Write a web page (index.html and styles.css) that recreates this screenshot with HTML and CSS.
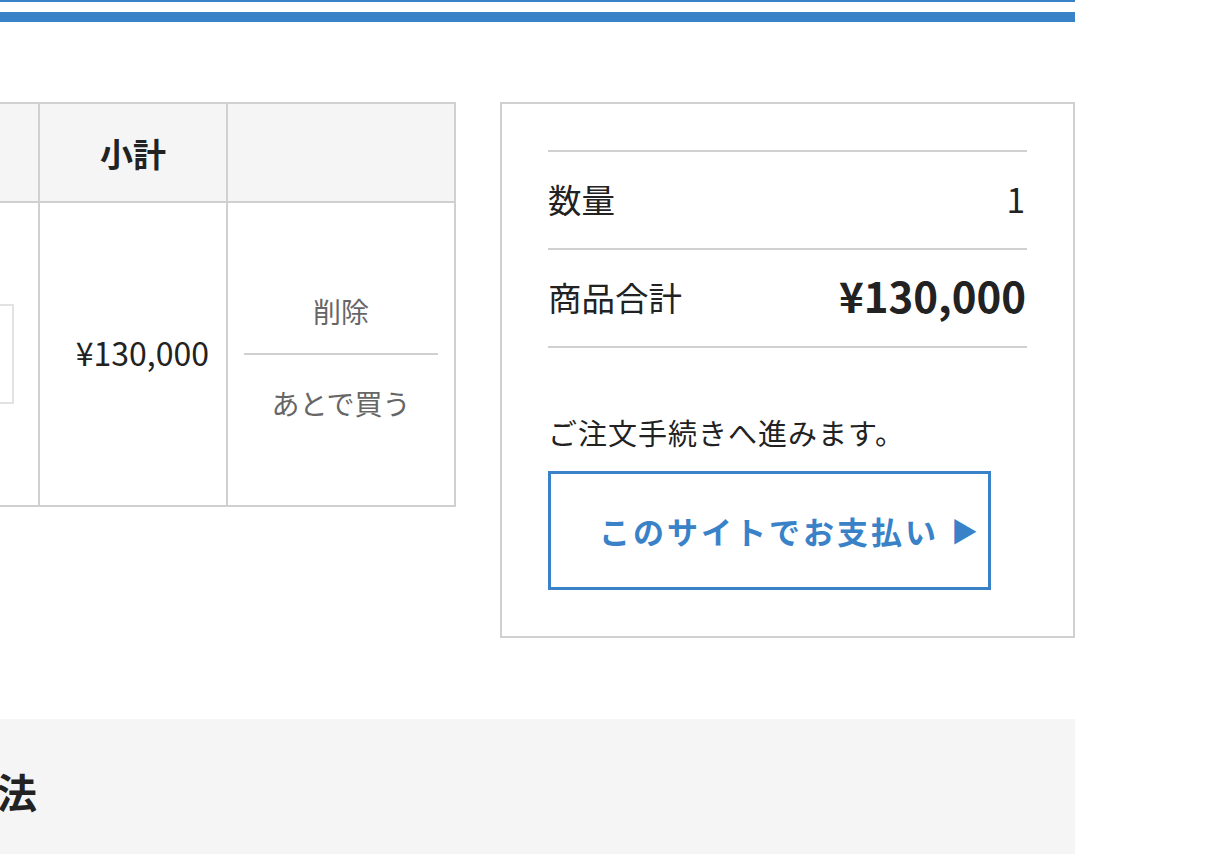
FILE: index.html
```html
<!DOCTYPE html>
<html lang="ja">
  <head>
    <meta charset="UTF-8" />
    <title>カート</title>
    <link rel="stylesheet" href="styles.css">
  </head>
  <body>
    <div class="page">
      <div class="bar-thin"></div>
      <div class="bar-thick"></div>

      <div class="cart">
        <table class="cart-table">
          <colgroup>
            <col class="col-item">
            <col class="col-qty">
            <col class="col-sub">
            <col class="col-act">
          </colgroup>
          <thead>
            <tr>
              <th>商品</th>
              <th>数量</th>
              <th>小計</th>
              <th></th>
            </tr>
          </thead>
          <tbody>
            <tr>
              <td></td>
              <td>
                <div class="qty-box">1</div>
              </td>
              <td class="cell-sub">¥130,000</td>
              <td class="cell-act">
                <a class="act-link act-delete" href="#">削除</a>
                <a class="act-link act-later" href="#">あとで買う</a>
              </td>
            </tr>
          </tbody>
        </table>

        <div class="summary">
          <div class="summary-row">
            <span>数量</span>
            <span class="summary-num">1</span>
          </div>
          <div class="summary-row">
            <span>商品合計</span>
            <span class="summary-total">¥130,000</span>
          </div>
          <p class="summary-note">ご注文手続きへ進みます。</p>
          <a class="pay-button" href="#">このサイトでお支払い<span class="pay-arrow">▶</span></a>
        </div>
      </div>

      <div class="payment">
        <h2>お支払い方法</h2>
      </div>
    </div>
  </body>
</html>
```

FILE: styles.css
```css
body {
  margin: 0;
  font-family: "Noto Sans CJK JP", "Noto Sans", sans-serif;
  color: #222;
  background: #fff;
  overflow: hidden;
}
.page {
  width: 1495px;
  margin-left: -420px;
}
.bar-thin {
  height: 2px;
  background: #3a82c8;
}
.bar-thick {
  height: 10px;
  margin-top: 10px;
  background: #3a82c8;
}
.cart {
  display: flex;
  align-items: flex-start;
  gap: 44px;
  margin-top: 80px;
}
.cart-table {
  flex-shrink: 0;
  width: 876px;
  table-layout: fixed;
  border-collapse: collapse;
  border: 2px solid #d0d0d0;
}
.col-item {
  width: 300px;
}
.col-qty {
  width: 158px;
}
.col-sub {
  width: 188px;
}
.col-act {
  width: 228px;
}
.cart-table th,
.cart-table td {
  border: 2px solid #d0d0d0;
  text-align: center;
  vertical-align: middle;
  padding: 0;
}
.cart-table th {
  height: 99px;
  box-sizing: border-box;
  background: #f5f5f5;
  font-size: 33px;
  font-weight: bold;
}
.cart-table td {
  height: 302px;
  font-size: 32px;
}
.cart-table td.cell-sub {
  height: 298px;
  padding: 0 17px 4px 0;
  text-align: right;
}
.cart-table td.cell-act {
  height: 296px;
  padding-top: 6px;
}
.qty-box {
  width: 100px;
  height: 96px;
  margin-left: 28px;
  border: 2px solid #e2e2e2;
  font-size: 28px;
  line-height: 96px;
}
.act-link {
  display: block;
  margin: 0 16px;
  color: #666;
  font-size: 28px;
  text-decoration: none;
}
.act-delete {
  padding: 0 0 22px;
  border-bottom: 2px solid #d0d0d0;
}
.act-later {
  padding-top: 28px;
}
.summary {
  flex-shrink: 0;
  width: 479px;
  padding: 46px;
  border: 2px solid #d0d0d0;
}
.summary-row {
  display: flex;
  justify-content: space-between;
  align-items: center;
  box-sizing: border-box;
  height: 98px;
  padding-bottom: 4px;
  border-top: 2px solid #d0d0d0;
  font-size: 33.5px;
}
.summary-row:last-of-type {
  height: 100px;
  border-bottom: 2px solid #d0d0d0;
}
.summary-num {
  padding-right: 2px;
}
.summary-total {
  font-size: 42px;
  font-weight: bold;
  padding: 0 1px 4px 0;
}
.summary-note {
  margin: 64px 0 0;
  font-size: 29px;
  line-height: 40px;
  letter-spacing: 1px;
}
.pay-button {
  display: flex;
  align-items: center;
  box-sizing: border-box;
  width: 443px;
  height: 119px;
  margin-top: 19px;
  padding-left: 48px;
  border: 3px solid #3a82c8;
  color: #3a82c8;
  font-size: 31px;
  font-weight: bold;
  letter-spacing: 3px;
  text-decoration: none;
}
.pay-arrow {
  margin-left: 12px;
  font-size: 27px;
}
.payment {
  margin-top: 81px;
  width: 1495px;
  height: 200px;
  background: #f5f5f5;
}
.payment h2 {
  margin: 0;
  padding: 44px 0 0 217px;
  font-size: 40px;
  line-height: 56px;
  font-weight: bold;
}
```
